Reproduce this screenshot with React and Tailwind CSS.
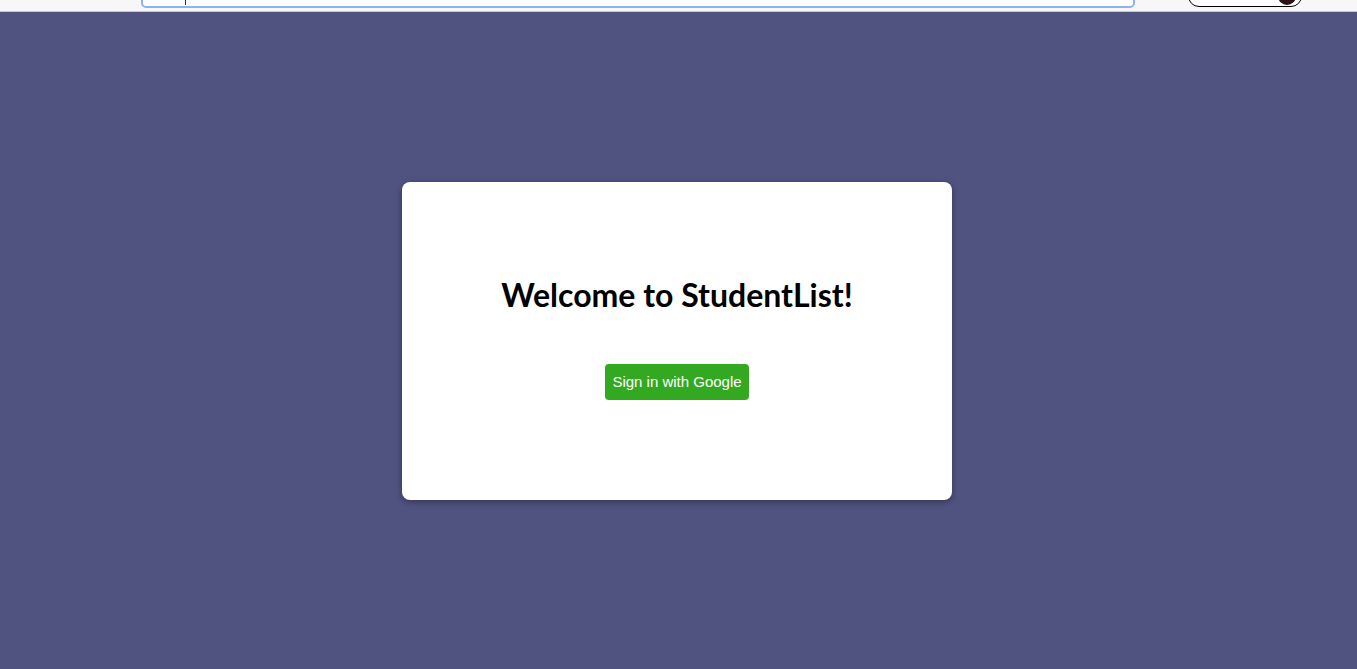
import React from 'react';

function TopStrip() {
  return (
    <div className="h-[12px] w-full bg-[#f7f7f7] border-b border-[#c9c9c9] flex items-end overflow-hidden">
      <div className="ml-[141px] w-[994px] h-[24px] mb-[3px] shrink-0 bg-white border-2 border-[#8fb1ec] rounded-[5px] relative">
        <span className="absolute left-[42px] bottom-[1px] w-px h-[6px] bg-[#333]" />
      </div>
      <div className="ml-[53px] w-[114px] h-[22px] mb-[4px] shrink-0 bg-white border border-black rounded-full relative overflow-hidden">
        <span className="absolute right-[5px] bottom-[1px] w-[18px] h-[18px] rounded-full bg-[#2a1418]" />
      </div>
    </div>
  );
}

export default function App() {
  return (
    <div className="min-h-[669px] w-full bg-[#505280] flex flex-col">
      <TopStrip />
      <div className="flex justify-center pt-[170px] pr-[3px]">
        <div className="w-[550px] h-[318px] bg-white rounded-[8px] shadow-[0_2px_6px_rgba(0,0,0,0.35)] flex flex-col items-center">
          <h1
            className="mt-[97px] text-[32px] font-bold text-black leading-none"
            style={{ fontFamily: '"Lato", "Open Sans", sans-serif' }}
          >
            Welcome to StudentList!
          </h1>
          <button
            className="mt-[53px] h-[36px] px-[7px] rounded-[4px] bg-[#32a920] text-white text-[15px]"
            style={{ fontFamily: '"Liberation Sans", Arial, sans-serif' }}
          >
            Sign in with Google
          </button>
        </div>
      </div>
    </div>
  );
}
